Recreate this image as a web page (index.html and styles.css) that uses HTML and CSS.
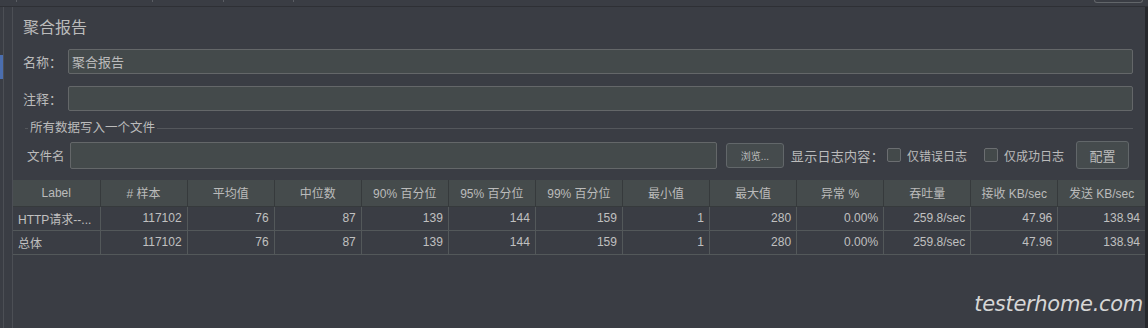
FILE: index.html
```html
<!doctype html>
<html lang="zh-CN">
    <head>
        <meta charset="UTF-8" />
        <title>聚合报告</title>
        <link rel="stylesheet" href="styles.css">
    </head>
    <body>
        <div class="tabs">
            <span class="tab tab-a"></span>
            <span class="tab tab-b"></span>
            <span class="tab tab-c"></span>
            <span class="tab tab-d"></span>
            <span class="corner-btn"></span>
        </div>

        <div class="main">
            <div class="tree"><div class="tree-sel"></div></div>
            <div class="split"></div>

            <div class="panel">
                <div class="form">
                    <h1 class="title">聚合报告</h1>

                    <div class="row">
                        <label class="row-label" for="name">名称：</label>
                        <input class="text-input" id="name" type="text" value="聚合报告" />
                    </div>
                    <div class="row">
                        <label class="row-label" for="comment">注释：</label>
                        <input class="text-input" id="comment" type="text" />
                    </div>

                    <fieldset class="file-box">
                        <legend>所有数据写入一个文件</legend>
                        <div class="file-row">
                            <label class="file-label" for="file">文件名</label>
                            <input class="text-input file-input" id="file" type="text" />
                            <button class="btn btn-browse">浏览...</button>
                            <span class="log-label">显示日志内容：</span>
                            <input class="check" type="checkbox" id="err" />
                            <label class="check-label" for="err">仅错误日志</label>
                            <input class="check" type="checkbox" id="ok" />
                            <label class="check-label" for="ok">仅成功日志</label>
                            <button class="btn btn-config">配置</button>
                        </div>
                    </fieldset>
                </div>

                <table class="report">
                    <thead>
                        <tr>
                            <th>Label</th>
                            <th># 样本</th>
                            <th>平均值</th>
                            <th>中位数</th>
                            <th>90% 百分位</th>
                            <th>95% 百分位</th>
                            <th>99% 百分位</th>
                            <th>最小值</th>
                            <th>最大值</th>
                            <th>异常 %</th>
                            <th>吞吐量</th>
                            <th>接收 KB/sec</th>
                            <th>发送 KB/sec</th>
                        </tr>
                    </thead>
                    <tbody>
                        <tr>
                            <td class="name">HTTP请求--...</td>
                            <td>117102</td>
                            <td>76</td>
                            <td>87</td>
                            <td>139</td>
                            <td>144</td>
                            <td>159</td>
                            <td>1</td>
                            <td>280</td>
                            <td>0.00%</td>
                            <td>259.8/sec</td>
                            <td>47.96</td>
                            <td>138.94</td>
                        </tr>
                        <tr>
                            <td class="name">总体</td>
                            <td>117102</td>
                            <td>76</td>
                            <td>87</td>
                            <td>139</td>
                            <td>144</td>
                            <td>159</td>
                            <td>1</td>
                            <td>280</td>
                            <td>0.00%</td>
                            <td>259.8/sec</td>
                            <td>47.96</td>
                            <td>138.94</td>
                        </tr>
                    </tbody>
                </table>

                <div class="watermark">testerhome.com</div>
            </div>

            <div class="edge"></div>
        </div>
    </body>
</html>
```

FILE: styles.css
```css
* {
    margin: 0;
    padding: 0;
    box-sizing: border-box;
}

body {
    width: 1148px;
    height: 328px;
    overflow: hidden;
    background-color: #3a3d44;
    color: #bbbbbb;
    font-family: 'Liberation Sans', 'Noto Sans CJK SC', sans-serif;
    font-size: 13px;
}

/* top tab strip (mostly cut off) */
.tabs {
    display: flex;
    height: 7px;
    border-bottom: 1px solid #2e3035;
}

.tab {
    height: 2px;
    border-right: 1px solid #5a5d63;
}

.tab-a { width: 17px; }
.tab-b { width: 136px; }
.tab-c { width: 71px; }
.tab-d { width: 70px; }

.corner-btn {
    margin-left: auto;
    margin-right: 5px;
    width: 49px;
    height: 4px;
    margin-top: -1px;
    border: 1px solid #62666a;
    border-top: none;
    border-radius: 0 0 3px 3px;
}

.main {
    display: flex;
    height: 321px;
}

.tree {
    width: 4px;
    border-right: 1px solid #4c4f55;
}

.tree-sel {
    margin-top: 48px;
    width: 3px;
    height: 24px;
    background-color: #4b6eaf;
}

.split {
    width: 9px;
    border-right: 1px solid #4c4f55;
}

.panel {
    position: relative;
    width: 1132px;
}

.edge {
    width: 3px;
    background-color: #26282c;
}

.form {
    padding: 0 12px 0 10px;
}

.title {
    margin-top: 11px;
    font-size: 16px;
    line-height: 20px;
    font-weight: normal;
    color: #bbbbbb;
}

.row {
    display: flex;
    align-items: center;
    margin-top: 11px;
}

.row + .row {
    margin-top: 12px;
}

.row-label {
    width: 45px;
    font-size: 13px;
}

.text-input {
    flex: 1;
    height: 25px;
    padding: 0 3px;
    background-color: #444a4b;
    border: 1px solid #646769;
    border-radius: 2px;
    color: #bbbbbb;
    font-family: 'Liberation Sans', 'Noto Sans CJK SC', sans-serif;
    font-size: 13px;
    outline: none;
}

/* file section */
.file-box {
    margin: 8px 0 0 2px;
    padding: 0 0 0 2px;
    border: none;
    border-top: 1px solid #54575c;
}

.file-box legend {
    margin-left: 1px;
    padding: 0 2px;
    font-size: 12.5px;
    line-height: 18px;
}

.file-row {
    display: flex;
    align-items: center;
    height: 28px;
    margin-top: 4px;
}

.file-label {
    width: 43px;
    font-size: 12.5px;
}

.file-input {
    height: 27px;
}

.btn {
    background-color: #454b4d;
    border: 1px solid #62676a;
    border-radius: 3px;
    color: #bbbbbb;
    font-family: 'Liberation Sans', 'Noto Sans CJK SC', sans-serif;
}

.btn-browse {
    width: 58px;
    height: 25px;
    margin-left: 9px;
    font-size: 10px;
}

.log-label {
    margin-left: 7px;
    font-size: 13px;
    letter-spacing: 0.3px;
}

.check {
    appearance: none;
    width: 14px;
    height: 14px;
    margin-left: 3px;
    background-color: #43494a;
    border: 1px solid #6b6e71;
    border-radius: 2px;
}

.check + .check-label {
    margin-left: 6px;
    font-size: 12px;
}

#ok {
    margin-left: 17px;
}

.btn-config {
    width: 53px;
    height: 28px;
    margin-left: 12px;
    margin-right: 4px;
    font-size: 13px;
}

/* aggregate table */
.report {
    width: 1132px;
    margin-top: 11px;
    border-collapse: collapse;
    table-layout: fixed;
    font-size: 12px;
}

.report th {
    height: 26px;
    background-color: #454b4c;
    border-right: 1px solid #363a3c;
    border-bottom: 1px solid #363a3c;
    font-weight: normal;
    color: #bbbbbb;
    text-align: center;
}

.report td {
    height: 24px;
    padding: 0 5px;
    border-right: 1px solid #53585a;
    border-bottom: 1px solid #53585a;
    text-align: right;
    color: #c0c0c0;
    white-space: nowrap;
    overflow: hidden;
}

.report td.name {
    text-align: left;
}

.report tr > :last-child {
    border-right: none;
}

.watermark {
    position: absolute;
    right: 2px;
    bottom: 12px;
    font-family: 'DejaVu Sans', sans-serif;
    font-weight: 200;
    font-style: italic;
    font-size: 21px;
    color: #d6d6d6;
    letter-spacing: -0.3px;
}
```
